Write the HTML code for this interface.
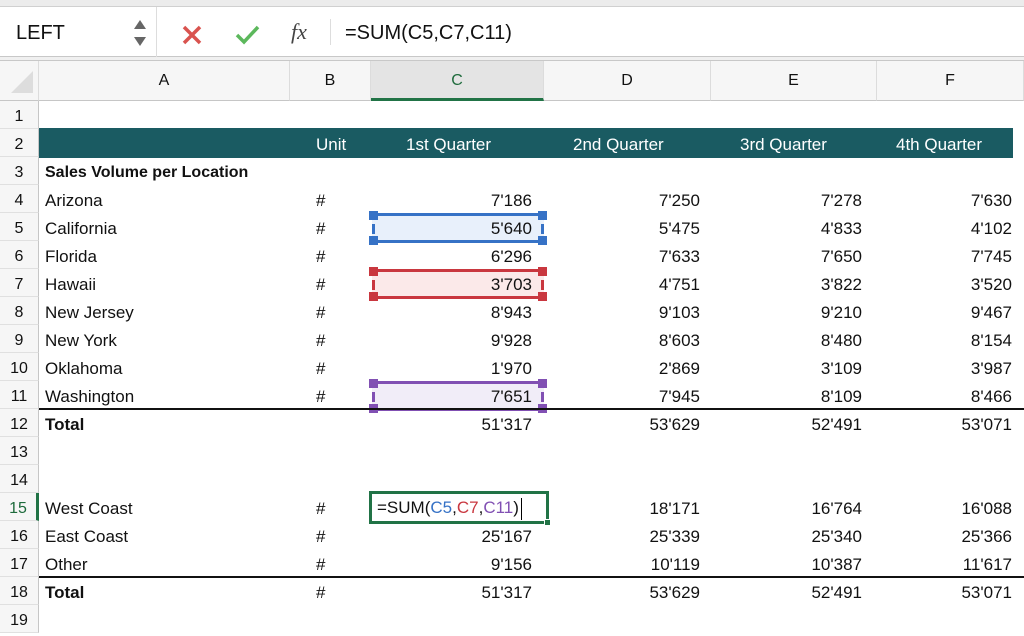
<!DOCTYPE html>
<html><head><meta charset="utf-8"><style>
*{margin:0;padding:0;box-sizing:border-box}
body{width:1024px;height:618px;overflow:hidden;background:#fff;font-family:"Liberation Sans",sans-serif;position:relative;color:#111}
.top{position:absolute;left:0;top:0;width:1024px;height:7px;background:#ececec;border-bottom:1px solid #d0d0d0}
.fbar{position:absolute;left:0;top:7px;width:1024px;height:50px;background:#fff;border-bottom:1px solid #c8c8c8}
.fsep{position:absolute;left:0;top:57px;width:1024px;height:4px;background:#f0f0f0;border-bottom:1px solid #c8c8c8}
.abs{position:absolute}
.colh{position:absolute;top:61px;height:40px;background:#f6f6f6;border-bottom:1px solid #c6c6c6;border-right:1px solid #dcdcdc;font-size:16px;text-align:center;line-height:40px}
.r{position:absolute;left:0;width:1024px;height:27.875px;font-size:17px;line-height:27.875px}
.r span{position:absolute;top:2px}
.r span.rn{top:0;line-height:31px}
.rn{left:0;width:39px;text-align:center;background:#f6f6f6;border-right:1px solid #c6c6c6;border-bottom:1px solid #e0e0e0;height:27.875px;font-size:16px}
.a{left:45px}
.b{left:316px}
.c{right:492px}
.d{right:324px}
.e{right:162px}
.f{right:12px}
.bold{font-weight:bold}
.h{color:#fff}
.sel{position:absolute;left:372px;width:172px;height:30px}
.sel i{position:absolute;width:9px;height:9px}
</style></head><body>
<div class="top"></div>
<div class="fbar">
 <div class="abs" style="left:16px;top:15px;font-size:20px">LEFT</div>
 <svg class="abs" style="left:131px;top:8px" width="18" height="36"><path d="M3 14 L9 5 L15 14Z" fill="#666"/><path d="M3 22 L9 31 L15 22Z" fill="#666"/></svg>
 <div class="abs" style="left:156px;top:0;width:1px;height:50px;background:#ddd"></div>
 <svg class="abs" style="left:181px;top:17px" width="22" height="22"><path d="M3 3L19 19M19 3L3 19" stroke="#d9534f" stroke-width="3.5"/></svg>
 <svg class="abs" style="left:234px;top:16px" width="28" height="24"><path d="M3 12L10 19L24 4" stroke="#5cb85c" stroke-width="3.5" fill="none"/></svg>
 <div class="abs" style="left:291px;top:12px;font-size:22px;font-family:'Liberation Serif',serif;font-style:italic;color:#444">fx</div>
 <div class="abs" style="left:330px;top:12px;width:1px;height:26px;background:#ddd"></div>
 <div class="abs" style="left:345px;top:15px;font-size:20px">=SUM(C5,C7,C11)</div>
</div>
<div class="fsep"></div>
<div class="colh" style="left:0;width:39px;background:#f6f6f6"><svg width="30" height="30" style="position:absolute;left:7px;top:6px"><path d="M26 4L26 26L4 26Z" fill="#ddd"/></svg></div>
<div class="colh" style="left:39px;width:251px">A</div>
<div class="colh" style="left:290px;width:81px">B</div>
<div class="colh" style="left:371px;width:173px;color:#1e6b3c;background:#e4e4e4;border-bottom:3px solid #217346">C</div>
<div class="colh" style="left:544px;width:167px">D</div>
<div class="colh" style="left:711px;width:166px">E</div>
<div class="colh" style="left:877px;width:147px">F</div>

<div class="abs" style="left:39px;top:128px;width:974px;height:30px;background:#1a5b62"></div>

<div class="r" style="top:101px"><span class="rn">1</span></div>
<div class="r" style="top:129px"><span class="rn">2</span><span class="b h" style="left:316px">Unit</span><span class="h" style="left:406px">1st Quarter</span><span class="h" style="left:573px">2nd Quarter</span><span class="h" style="left:740px">3rd Quarter</span><span class="h" style="left:896px">4th Quarter</span></div>
<div class="r" style="top:157px"><span class="rn">3</span><span class="a bold" style="font-size:16px">Sales Volume per Location</span></div>
<div class="r" style="top:185px"><span class="rn">4</span><span class="a">Arizona</span><span class="b">#</span><span class="c">7'186</span><span class="d">7'250</span><span class="e">7'278</span><span class="f">7'630</span></div>
<div class="sel" style="top:213px;background:#e8f0fb;border:3px solid #3672c6;border-left:none;border-right:none"><i style="left:-3px;top:-5px;background:#3672c6"></i><i style="right:-3px;top:-5px;background:#3672c6"></i><i style="left:-3px;bottom:-5px;background:#3672c6"></i><i style="right:-3px;bottom:-5px;background:#3672c6"></i><i style="left:0;top:8px;width:3px;height:10px;background:#3672c6"></i><i style="right:0;top:8px;width:3px;height:10px;background:#3672c6"></i></div>
<div class="sel" style="top:269px;background:#fbe9e9;border:3px solid #c9373f;border-left:none;border-right:none"><i style="left:-3px;top:-5px;background:#c9373f"></i><i style="right:-3px;top:-5px;background:#c9373f"></i><i style="left:-3px;bottom:-5px;background:#c9373f"></i><i style="right:-3px;bottom:-5px;background:#c9373f"></i><i style="left:0;top:8px;width:3px;height:10px;background:#c9373f"></i><i style="right:0;top:8px;width:3px;height:10px;background:#c9373f"></i></div>
<div class="sel" style="top:381px;background:#f1edf8;border:3px solid #8150b3;border-left:none;border-right:none"><i style="left:-3px;top:-5px;background:#8150b3"></i><i style="right:-3px;top:-5px;background:#8150b3"></i><i style="left:-3px;bottom:-5px;background:#8150b3"></i><i style="right:-3px;bottom:-5px;background:#8150b3"></i><i style="left:0;top:8px;width:3px;height:10px;background:#8150b3"></i><i style="right:0;top:8px;width:3px;height:10px;background:#8150b3"></i></div>
<div class="r" style="top:213px"><span class="rn">5</span><span class="a">California</span><span class="b">#</span><span class="c">5'640</span><span class="d">5'475</span><span class="e">4'833</span><span class="f">4'102</span></div>
<div class="r" style="top:241px"><span class="rn">6</span><span class="a">Florida</span><span class="b">#</span><span class="c">6'296</span><span class="d">7'633</span><span class="e">7'650</span><span class="f">7'745</span></div>
<div class="r" style="top:269px"><span class="rn">7</span><span class="a">Hawaii</span><span class="b">#</span><span class="c">3'703</span><span class="d">4'751</span><span class="e">3'822</span><span class="f">3'520</span></div>
<div class="r" style="top:297px"><span class="rn">8</span><span class="a">New Jersey</span><span class="b">#</span><span class="c">8'943</span><span class="d">9'103</span><span class="e">9'210</span><span class="f">9'467</span></div>
<div class="r" style="top:325px"><span class="rn">9</span><span class="a">New York</span><span class="b">#</span><span class="c">9'928</span><span class="d">8'603</span><span class="e">8'480</span><span class="f">8'154</span></div>
<div class="r" style="top:353px"><span class="rn">10</span><span class="a">Oklahoma</span><span class="b">#</span><span class="c">1'970</span><span class="d">2'869</span><span class="e">3'109</span><span class="f">3'987</span></div>
<div class="r" style="top:381px"><span class="rn">11</span><span class="a">Washington</span><span class="b">#</span><span class="c">7'651</span><span class="d">7'945</span><span class="e">8'109</span><span class="f">8'466</span></div>
<div class="abs" style="left:39px;top:408px;width:985px;height:2px;background:#111"></div>
<div class="r" style="top:409px"><span class="rn">12</span><span class="a bold">Total</span><span class="c">51'317</span><span class="d">53'629</span><span class="e">52'491</span><span class="f">53'071</span></div>
<div class="r" style="top:437px"><span class="rn">13</span></div>
<div class="r" style="top:465px"><span class="rn">14</span></div>
<div class="r" style="top:493px"><span class="rn" style="color:#1e6b3c;border-right:3px solid #217346">15</span><span class="a">West Coast</span><span class="b">#</span><span class="d">18'171</span><span class="e">16'764</span><span class="f">16'088</span></div>
<div class="abs" style="left:369px;top:491px;width:180px;height:33px;border:3px solid #217346;font-size:17px;line-height:28px;padding-left:5px">=SUM(<span style="color:#3672c6">C5</span>,<span style="color:#c9373f">C7</span>,<span style="color:#8150b3">C11</span>)<span style="display:inline-block;width:1px;height:22px;background:#000;vertical-align:middle;margin-left:2px"></span><i style="position:absolute;right:-5px;bottom:-5px;width:7px;height:7px;background:#217346;border:1px solid #fff"></i></div>
<div class="r" style="top:521px"><span class="rn">16</span><span class="a">East Coast</span><span class="b">#</span><span class="c">25'167</span><span class="d">25'339</span><span class="e">25'340</span><span class="f">25'366</span></div>
<div class="r" style="top:549px"><span class="rn">17</span><span class="a">Other</span><span class="b">#</span><span class="c">9'156</span><span class="d">10'119</span><span class="e">10'387</span><span class="f">11'617</span></div>
<div class="abs" style="left:39px;top:576px;width:985px;height:2px;background:#111"></div>
<div class="r" style="top:577px"><span class="rn">18</span><span class="a bold">Total</span><span class="b">#</span><span class="c">51'317</span><span class="d">53'629</span><span class="e">52'491</span><span class="f">53'071</span></div>
<div class="r" style="top:605px"><span class="rn">19</span></div>
</body></html>
